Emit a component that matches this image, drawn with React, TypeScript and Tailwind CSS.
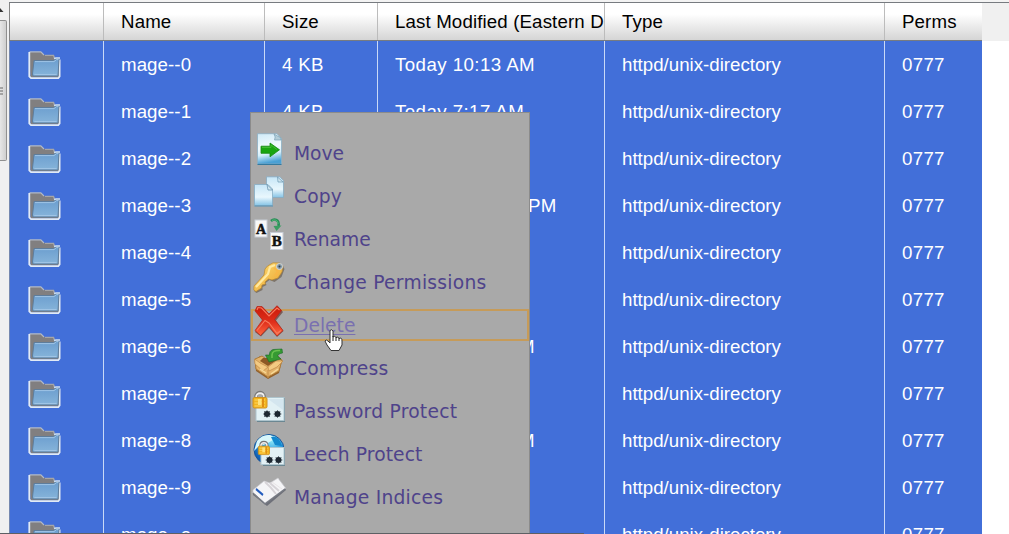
import React from "react";

const rows = [
  ["mage--0", "Today 10:13 AM"],
  ["mage--1", "Today 7:17 AM"],
  ["mage--2", "Today 7:17 AM"],
  ["mage--3", "Yesterday 3:10 PM"],
  ["mage--4", "Today 7:17 AM"],
  ["mage--5", "Today 7:17 AM"],
  ["mage--6", "Today 10:13 AM"],
  ["mage--7", "Today 7:17 AM"],
  ["mage--8", "Today 10:13 AM"],
  ["mage--9", "Today 7:17 AM"],
  ["mage--a", "Today 7:17 AM"],
];

const grid = "grid grid-cols-[94px_161px_113px_227px_280px_98px]";

function Defs() {
  return (
    <svg width="0" height="0" className="absolute">
      <defs>
        <linearGradient id="folder" x1="0" y1="0" x2="0" y2="1">
          <stop offset="0" stopColor="#6b9dce" />
          <stop offset="1" stopColor="#86b4da" />
        </linearGradient>
        <linearGradient id="paper" x1="0" y1="0" x2="0.15" y2="1">
          <stop offset="0" stopColor="#cfeaf7" />
          <stop offset="0.5" stopColor="#f1fafd" />
          <stop offset="0.72" stopColor="#d5effa" />
          <stop offset="1" stopColor="#4aa0d4" />
        </linearGradient>
        <linearGradient id="sheet" x1="0" y1="0" x2="0" y2="1">
          <stop offset="0" stopColor="#c6e6f7" />
          <stop offset="0.6" stopColor="#e9f7fd" />
          <stop offset="1" stopColor="#86c4e6" />
        </linearGradient>
        <linearGradient id="gold" x1="0" y1="0" x2="1" y2="1">
          <stop offset="0" stopColor="#ffdf78" />
          <stop offset="1" stopColor="#e8a02a" />
        </linearGradient>
        <linearGradient id="red" x1="0" y1="0" x2="0" y2="1">
          <stop offset="0" stopColor="#c81708" />
          <stop offset="0.55" stopColor="#e0301c" />
          <stop offset="1" stopColor="#ff6a42" />
        </linearGradient>
        <radialGradient id="globe" cx="0.6" cy="0.2" r="0.8">
          <stop offset="0" stopColor="#8fe8f8" />
          <stop offset="0.5" stopColor="#2796dd" />
          <stop offset="1" stopColor="#0b55ae" />
        </radialGradient>
      </defs>
    </svg>
  );
}

function Folder() {
  return (
    <svg width="34" height="30" viewBox="0 0 34 30" className="block">
      <path d="M1.5 2H13L16.5 5H25.5L26.5 9H31V27.5H2.5Z" fill="#817f80" />
      <path d="M1.5 1.8H12.8L16 5" fill="none" stroke="#b3bac6" strokeWidth="1.2" />
      <path d="M17 5.4H25.5L26.5 8" fill="none" stroke="#a5a5a8" strokeWidth="1.3" />
      <path d="M1.3 2V26.5L3 28.2H30.3L31.6 26.5V9.5" fill="none" stroke="#e1eaf5" strokeWidth="1.8" />
      <path d="M6 10.5H25.5L28 8.8H31L30 26H5L4.5 24Z" fill="url(#folder)" stroke="#5e7d9c" strokeWidth="1" />
      <path d="M7 11.6H26L28.5 9.6H30.5M6.4 24.5H28.5" fill="none" stroke="#9fc4e5" strokeWidth="1" />
      <path d="M26 8.5L28 8H32" fill="none" stroke="#cddff2" strokeWidth="1.3" />
    </svg>
  );
}

function Lock() {
  return (
    <g>
      <path d="M4 10V6C4 0 12 0 12 6V10" fill="none" stroke="#777" strokeWidth="3.5" />
      <path d="M4.2 10V6C4.2 1 11.8 1 11.8 6V10" fill="none" stroke="#eee" strokeWidth="1.8" />
      <rect x="1" y="6.5" width="14" height="10.5" rx="1.5" fill="#f3b51e" stroke="#d09220" />
      <path d="M2.5 9H13M2.5 12H13M2.5 15H13" stroke="#ffd65e" />
      <rect x="6" y="8" width="3.5" height="6" fill="#ffe27a" />
      <path d="M11 7V16" stroke="#df8f13" strokeWidth="2" />
    </g>
  );
}

function Star({ x, y }: { x: number; y: number }) {
  return (
    <g>
      <circle cx={x} cy={y} r="3" fill="#17212b" />
      <path d={`M${x - 4} ${y}h8M${x - 3} ${y - 3}l6 6M${x + 3} ${y - 3}l-6 6M${x} ${y - 4}v8`} stroke="#26313b" strokeWidth="1" opacity=".6" />
    </g>
  );
}

function MoveIcon() {
  return (
    <g>
      <path d="M5.5 .7H25L29.5 5.5V31H5.5Z" fill="url(#paper)" stroke="#8db0c4" strokeWidth=".8" />
      <path d="M5.5 31.4H29.5" stroke="#28749c" />
      <path d="M22 1Q24 4 22.5 7L29 7V5Z" fill="#b3cdd8" stroke="#7ba2b6" strokeWidth=".7" />
      <path d="M9 13.2H18V10L27.5 16.8L18 23.8V20.3H9Z" fill="#18a510" stroke="#178a12" strokeWidth=".8" />
      <path d="M10 14.5H19V12L25 16.5" fill="none" stroke="#41bb30" />
    </g>
  );
}

function CopyIcon() {
  return (
    <g>
      <path d="M14.5 .8H28L31.5 4.8V21.5H14.5Z" fill="url(#sheet)" stroke="#88abc0" strokeWidth=".8" />
      <path d="M25.5 1L26 6H31Z" fill="#cfe5ef" stroke="#6c98b1" strokeWidth=".7" />
      <path d="M2.5 8.5H16L20.5 13V29.5H2.5Z" fill="url(#sheet)" stroke="#86adc4" strokeWidth=".8" />
      <path d="M15 8.5L16 14H20.5Z" fill="#d4eaf3" stroke="#628da7" strokeWidth=".7" />
      <path d="M2.5 30H21" stroke="#5594b8" />
    </g>
  );
}

function RenameIcon() {
  return (
    <g>
      <rect x="3" y="1" width="12" height="17" fill="#f8f8f8" stroke="#c8cdd6" />
      <text x="9" y="14.5" textAnchor="middle" fontFamily="Liberation Serif, serif" fontWeight="bold" fontSize="14" fill="#111" stroke="#111" strokeWidth=".5">A</text>
      <rect x="18.5" y="13.5" width="12.5" height="17" fill="#fafafa" stroke="#c8cdd6" />
      <text x="24.8" y="27" textAnchor="middle" fontFamily="Liberation Serif, serif" fontWeight="bold" fontSize="15" fill="#111" stroke="#111" strokeWidth=".5">B</text>
      <path d="M19 2C22 -.5 27.5 0 26.5 7" fill="none" stroke="#278d58" strokeWidth="2.6" />
      <path d="M21.5 7L29.5 6.5L24.5 12Z" fill="#3a9d61" />
      <path d="M20 1.4C24 0 26 2 26 5" fill="none" stroke="#59bd79" strokeWidth="1" />
    </g>
  );
}

function KeyIcon() {
  return (
    <g>
      <path d="M16.5 4L23 1L29.5 2L32 6L29 14L22 19L17 17L13 20L14 22L10 24L10 27L4 30L2 28.5L2.5 25L13 13Z" fill="#665848" opacity=".65" transform="translate(.5 1)" />
      <path d="M15.5 4L21 .8L28 1L31 4L30 10L26 16L20 18L16.5 17L13 20L13.5 22L10 23L9.5 26L4 29.5L1.8 28L2 24L12 13L13 7Z" fill="url(#gold)" stroke="#b88630" strokeWidth=".7" />
      <path d="M4 25L16 12L18 5L23 3" fill="none" stroke="#ffe9a0" strokeWidth="2.2" />
      <path d="M22 6L26 9L23 14" fill="none" stroke="#f8b747" strokeWidth="2" />
      <circle cx="27.5" cy="4.5" r="3" fill="#8496a3" stroke="#d2dae0" />
      <circle cx="27.5" cy="4.5" r="1" fill="#283f4e" />
    </g>
  );
}

function DeleteIcon() {
  return (
    <g>
      <path d="M3 5L10 2L17 9L26 1.5L31 7L24 15.5L31.5 26L25 32L17 23L9 31.5L3 27L11 16Z" fill="#5c2920" opacity=".6" />
      <path d="M3 6L5 1.5L10 1.5L17 9L25 .7L29.5 5.5L22.5 14.5L31 25.5L25 31L17 21.5L8.5 30.5L3 25.5L10.5 15Z" fill="url(#red)" stroke="#b82417" strokeWidth=".7" />
      <path d="M5 5L6 2.5L9.5 3L17 11L25 3L27.5 5M5 25.5L13 15.5L17 18L25 28.5L29 25.5" fill="none" stroke="#f77b5d" strokeWidth="1.1" />
    </g>
  );
}

function CompressIcon() {
  return (
    <g>
      <path d="M3 13L8 8L16 13L26 8L30 12L27 25L16 31L4 23Z" fill="#93602a" />
      <path d="M3 11L10 8L17 13L25 9L30 12L27 23L16 29L4 21Z" fill="#e4b36a" stroke="#ae7b38" />
      <path d="M8 13L16 18L25 12L20 10L11 10Z" fill="#8c5925" />
      <path d="M2.5 11L9 15.5L16 19L11 23L3 16ZM16 19L24 13L31 13L25 19L17 23Z" fill="#f3ca82" stroke="#b98242" strokeWidth=".6" />
      <path d="M16 22V30" stroke="#cc9550" strokeWidth="1.2" />
      <path d="M8 21L14 25M19 26L26 21" stroke="#f6d998" strokeWidth="1.5" />
      <path d="M30 1L21 1.5Q17 3 17.5 7L13.5 7L17 14L29 11L26 8.5Q25 6 30.5 5Z" fill="#369a32" stroke="#166829" strokeWidth=".6" />
      <path d="M28 2.5Q20 2 20 7L20 10" fill="none" stroke="#69c24f" strokeWidth="1.6" />
    </g>
  );
}

function PasswordIcon() {
  return (
    <g>
      <rect x="5" y="7" width="28" height="24" fill="#6b8792" />
      <rect x="4" y="6.5" width="28" height="23" fill="#e2f1f5" stroke="#adc4cd" />
      <path d="M16 8H31V19Z" fill="#d4e6ef" />
      <Star x={15} y={23} />
      <Star x={25.5} y={23} />
      <Lock />
    </g>
  );
}

function LeechIcon() {
  return (
    <g>
      <circle cx="17" cy="15.5" r="15" fill="url(#globe)" stroke="#18559b" strokeWidth="1" />
      <path d="M5 7Q10 0 18 1L24 4L16 9L6 13L2 17Z" fill="#d8f7fb" />
      <path d="M19 3Q27 1 30 12L23 11Z" fill="#1388cd" />
      <rect x="11" y="14" width="22" height="18" fill="#6b8792" />
      <rect x="9" y="13.5" width="23" height="17" fill="#e3f1f5" stroke="#afc6d0" />
      <Star x={17.5} y={26} />
      <Star x={26.5} y={26} />
      <g transform="translate(5.5 7) scale(.8)"><Lock /></g>
    </g>
  );
}

function IndexIcon() {
  return (
    <g>
      <path d="M1 17L13 5L21 7L27 2L34 13L15 29L1 18Z" fill="#555865" opacity=".7" />
      <path d="M1 13L12 4L18 6L26 1L33.5 11L13 26L1 16Z" fill="#f5f5f7" stroke="#c8c8cf" strokeWidth=".7" />
      <path d="M13 5Q19 10 24 17M18 6L27 14" fill="none" stroke="#d6d3d7" strokeWidth="2" />
      <path d="M20 5L30 12" stroke="#e9e5e7" strokeWidth="1" />
      <path d="M4.5 11L11.5 17L10.5 19L3.5 13Z" fill="#245dbe" />
      <path d="M1 16L13 27L33 12" fill="none" stroke="#777b84" strokeWidth="1.2" />
    </g>
  );
}

const items: { label: string; icon: React.ReactNode; tracking: string }[] = [
  { label: "Move", icon: <MoveIcon />, tracking: "tracking-normal" },
  { label: "Copy", icon: <CopyIcon />, tracking: "tracking-[0.1px]" },
  { label: "Rename", icon: <RenameIcon />, tracking: "tracking-normal" },
  { label: "Change Permissions", icon: <KeyIcon />, tracking: "tracking-[0.25px]" },
  { label: "Delete", icon: <DeleteIcon />, tracking: "tracking-normal" },
  { label: "Compress", icon: <CompressIcon />, tracking: "tracking-[0.2px]" },
  { label: "Password Protect", icon: <PasswordIcon />, tracking: "tracking-[0.25px]" },
  { label: "Leech Protect", icon: <LeechIcon />, tracking: "tracking-[0.1px]" },
  { label: "Manage Indices", icon: <IndexIcon />, tracking: "tracking-[0.22px]" },
];

function ContextMenu() {
  return (
    <div className="absolute left-[250px] top-[112px] h-[422px] w-[280px] border border-[#8b8b8b] bg-[#a9a9a9] pt-[19px] font-['DejaVu_Sans',sans-serif] text-[18.7px] text-[#4f438b]">
      {items.map(({ label, icon, tracking }) => (
        <div key={label} className="h-[43px] pt-[5px]">
          <div className={`flex h-[32px] w-[278px] items-center border-2 ${label === "Delete" ? "border-[#c69b59] text-[#7970b0] underline decoration-1 underline-offset-2" : "border-transparent"}`}>
            <svg width="34" height="33" viewBox="0 0 34 33" className="-ml-[1px] mr-[8px] mb-[8px] shrink-0 overflow-visible">{icon}</svg>
            <span className={`whitespace-nowrap pt-[2px] leading-[22px] ${tracking}`}>{label}</span>
          </div>
        </div>
      ))}
    </div>
  );
}

export default function App() {
  return (
    <main className="relative flex h-[534px] w-[1009px] overflow-hidden bg-white font-['Liberation_Sans',sans-serif] text-[18.7px]">
      <Defs />
      <aside className="h-full w-[9px] shrink-0 bg-[#f0f0f0]">
        <div className="flex h-[20px] items-center">
          <svg width="8" height="20"><path d="M0 8L3.5 12H0Z" fill="#333" /></svg>
        </div>
        <div className="flex h-[141px] w-[7px] items-center rounded-r-[2px] border border-l-0 border-[#909090] bg-gradient-to-r from-[#e6e6e6] to-[#cfcfcf]">
          <svg width="4" height="8"><path d="M0 1H3M0 4H3M0 7H3" stroke="#666" /></svg>
        </div>
      </aside>
      <section className="flex h-full w-[1000px] shrink-0 flex-col">
        <div className="h-[3px] shrink-0 border-b border-[#777b80] bg-[#f3f3f3]" />
        <div className="flex h-[38px] shrink-0 bg-[#f0f0f0]">
          <header className={`${grid} h-[38px] w-[973px] border-b border-b-[#777b80] border-l border-l-[#858585] bg-gradient-to-b from-white from-30% to-[#d5d5d5] text-black`}>
            {["", "Name", "Size", "Last Modified (Eastern D", "Type", "Perms"].map((h, i) => (
              <div key={i} className={`overflow-hidden whitespace-nowrap pl-[17px] leading-[37px] tracking-[0.13px] ${i < 5 ? "border-r border-[#bcbcbc]" : ""}`}>{h}</div>
            ))}
          </header>
        </div>
        <div className="w-[973px] border-l border-[#7588b0] bg-[#426fd9] text-white">
          {rows.map(([name, modified]) => (
            <div key={name} className={`${grid} h-[47px]`}>
              <div className="border-r border-[#c9d9f7] pl-[18px] pt-[9px]"><Folder /></div>
              <div className="border-r border-[#c9d9f7] pl-[17px] leading-[47px] tracking-[0.08px]">{name}</div>
              <div className="border-r border-[#c9d9f7] pl-[17px] leading-[47px] tracking-[0.3px]">4 KB</div>
              <div className={`border-r border-[#c9d9f7] pl-[17px] leading-[47px] ${modified.startsWith("Y") ? "tracking-[0.25px]" : "tracking-[0.43px]"}`}>{modified}</div>
              <div className="border-r border-[#c9d9f7] pl-[17px] leading-[47px]">httpd/unix-directory</div>
              <div className="pl-[17px] leading-[47px] tracking-[0.3px]">0777</div>
            </div>
          ))}
        </div>
      </section>
      <ContextMenu />
      <svg className="absolute left-[324px] top-[329px]" width="20" height="24" viewBox="0 0 20 24">
        <path d="M6 1.5Q8-.5 9 2V8Q11 6 12 8.5Q14 7 15 9.5Q18 8 18 12V16L15 21.5H7L3 16L1 12Q2 10 4 12L6 14Z" fill="white" stroke="#333" strokeWidth="1" />
        <path d="M9 7V12M12 8V12M15 9V12" stroke="#222" />
      </svg>
      <div className="absolute left-0 top-[533px] h-px w-[584px] bg-[#5d6064]" />
    </main>
  );
}
